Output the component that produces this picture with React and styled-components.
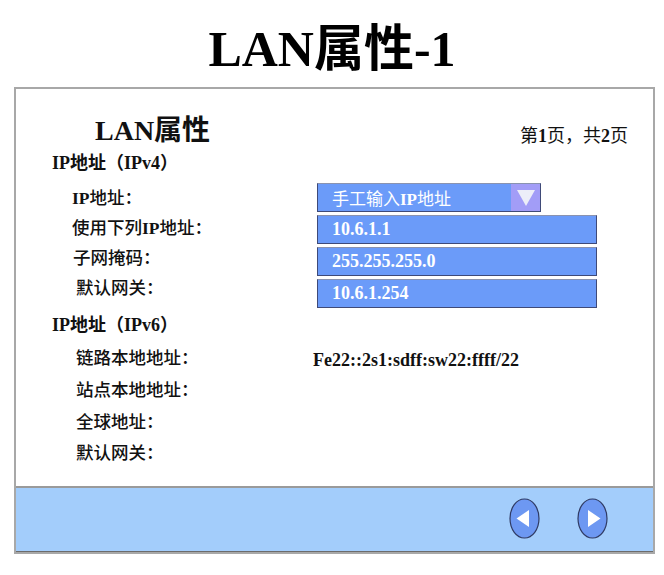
import React from 'react';
import styled, { createGlobalStyle } from 'styled-components';

const GlobalStyle = createGlobalStyle`
  body {
    margin: 0;
    background: #ffffff;
    font-family: "Liberation Serif", "Noto Sans CJK SC", serif;
    color: #111;
  }
`;

const Page = styled.div`
  width: 664px;
  height: 575px;
  overflow: hidden;
`;

const Title = styled.h1`
  margin: 0;
  height: 87px;
  display: flex;
  align-items: center;
  justify-content: center;
  font-size: 50px;
  font-weight: 700;
  letter-spacing: 0;
  color: #000;
`;

const Panel = styled.div`
  box-sizing: border-box;
  width: 641px;
  height: 467px;
  margin-left: 14px;
  border: 2px solid #a8a8a8;
  display: flex;
  flex-direction: column;
`;

const Body = styled.div`
  flex: 1;
  padding: 26px 25px 0 36px;
`;

const Header = styled.div`
  display: flex;
  justify-content: space-between;
  align-items: center;
  height: 32px;
`;

const PanelTitle = styled.div`
  margin-left: 43px;
  font-size: 28px;
  font-weight: 700;
  line-height: 32px;
`;

const PageInfo = styled.div`
  font-size: 18px;
  margin-top: 6px;
  b { font-weight: 700; }
`;

const SectionHead = styled.div`
  margin-top: ${p => p.$top}px;
  font-size: 18px;
  font-weight: 700;
  line-height: 22px;
`;

const FormBlock = styled.div`
  display: flex;
  margin-top: 9px;
  padding-left: 20px;
`;

const LabelCol = styled.div`
  width: 245px;
  display: flex;
  flex-direction: column;
`;

const Label = styled.div`
  font-size: 17.5px;
  font-weight: 500;
  line-height: ${p => p.$h || 30}px;
  height: ${p => p.$h || 30}px;
  padding-left: ${p => p.$shift || 0}px;
  b { font-weight: 700; }
`;

const FieldCol = styled.div`
  display: flex;
  flex-direction: column;
  gap: 3px;
`;

const Field = styled.div`
  box-sizing: border-box;
  width: ${p => p.$w}px;
  height: 29px;
  background: #6b9bf9;
  border: 1px solid #3f4a78;
  border-top-color: #8a93b0;
  display: flex;
  align-items: center;
  padding-left: 14px;
  color: #fff;
  font-size: 18px;
  font-weight: ${p => (p.$plain ? 400 : 700)};
`;

const SelectText = styled.span`
  flex: 1;
  font-size: 17px;
  b { font-weight: 700; }
`;

const SelectArrow = styled.div`
  width: 29px;
  height: 100%;
  background: #a29df7;
  display: flex;
  align-items: center;
  justify-content: center;
`;

const V6Block = styled.div`
  margin-top: 6px;
  padding-left: 24px;
  display: grid;
  grid-template-columns: 237px 1fr;
`;

const V6Value = styled.div`
  font-size: 18px;
  font-weight: 700;
  line-height: ${p => p.$h + 3}px;
  height: ${p => p.$h}px;
`;

const Footer = styled.div`
  height: 66px;
  box-sizing: border-box;
  background: #a3cdfb;
  border-top: 2px solid #9a9a9a;
  border-bottom: 1px solid #6c6c6c;
  display: flex;
  justify-content: flex-end;
  align-items: center;
  gap: 37px;
  padding: 0 45px 2px 0;
`;

const NavButton = styled.button`
  width: 31px;
  height: 41px;
  padding: 0;
  border: none;
  background: none;
  cursor: pointer;
  svg { display: block; }
`;

const NavIcon = ({ dir }) => (
  <svg width="31" height="41" viewBox="0 0 31 41">
    <ellipse cx="15.5" cy="20.5" rx="14.5" ry="19.5" fill="#6d98f2" stroke="#2f3a63" strokeWidth="1.2" />
    {dir === 'left' ? (
      <polygon points="7.5,20.5 20,12 20,29" fill="#ffffff" />
    ) : (
      <polygon points="23.5,20.5 11,12 11,29" fill="#ffffff" />
    )}
  </svg>
);

const v6Rows = [
  { label: '链路本地地址：', value: 'Fe22::2s1:sdff:sw22:ffff/22', h: 33 },
  { label: '站点本地地址：', value: '', h: 31 },
  { label: '全球地址：', value: '', h: 32, shift: -3 },
  { label: '默认网关：', value: '', h: 30 },
];

export default function App() {
  return (
    <Page>
      <GlobalStyle />
      <Title>LAN属性-1</Title>
      <Panel>
        <Body>
          <Header>
            <PanelTitle>LAN属性</PanelTitle>
            <PageInfo>第<b>1</b>页，共<b>2</b>页</PageInfo>
          </Header>
          <SectionHead $top={5}>IP地址（IPv4）</SectionHead>
          <FormBlock>
            <LabelCol>
              <Label><b>IP</b>地址：</Label>
              <Label>使用下列<b>IP</b>地址：</Label>
              <Label $shift={1}>子网掩码：</Label>
              <Label $shift={4}>默认网关：</Label>
            </LabelCol>
            <FieldCol>
              <Field $w={224} $plain style={{ paddingRight: 0 }}>
                <SelectText>手工输入<b>IP</b>地址</SelectText>
                <SelectArrow>
                  <svg width="20" height="18" viewBox="0 0 20 18">
                    <polygon points="1,1 19,1 10,17" fill="#eceef8" />
                  </svg>
                </SelectArrow>
              </Field>
              <Field $w={280}>10.6.1.1</Field>
              <Field $w={280}>255.255.255.0</Field>
              <Field $w={280}>10.6.1.254</Field>
            </FieldCol>
          </FormBlock>
          <SectionHead $top={6}>IP地址（IPv6）</SectionHead>
          <V6Block>
            {v6Rows.map(r => (
              <React.Fragment key={r.label}>
                <Label $h={r.h} $shift={r.shift}>{r.label}</Label>
                <V6Value $h={r.h}>{r.value}</V6Value>
              </React.Fragment>
            ))}
          </V6Block>
        </Body>
        <Footer>
          <NavButton aria-label="previous"><NavIcon dir="left" /></NavButton>
          <NavButton aria-label="next"><NavIcon dir="right" /></NavButton>
        </Footer>
      </Panel>
    </Page>
  );
}
